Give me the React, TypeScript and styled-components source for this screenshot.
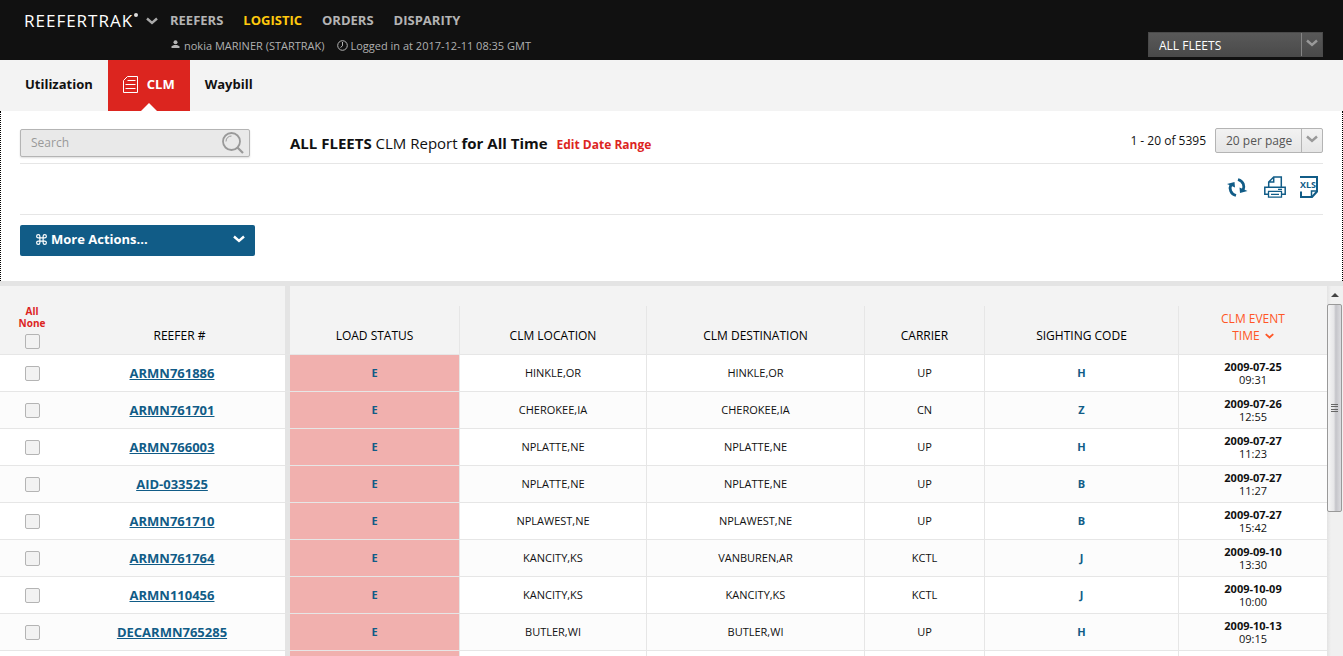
import React from 'react';
import styled, { createGlobalStyle, css } from 'styled-components';

const blue = '#115c87';
const red = '#dc251f';
const line = '#e6e6e6';

const GlobalStyle = createGlobalStyle`
  *, *::before, *::after { box-sizing: border-box; }
  body { margin: 0; background: #fff; color: #111; font: 12px/16px 'Open Sans', 'Noto Sans', sans-serif; }
  button, input, select { font-family: inherit; margin: 0; }
`;

const Page = styled.div`
  display: flex;
  flex-direction: column;
  height: 100vh;
  overflow: hidden;
`;

const TopBar = styled.header`
  display: flex;
  justify-content: space-between;
  align-items: flex-end;
  flex: none;
  height: 60px;
  padding: 0 20px 3px 24px;
  background: #111;
`;

const Brand = styled.div`
  display: flex;
  align-self: flex-start;
`;

const LogoButton = styled.button`
  display: flex;
  align-items: center;
  gap: 8px;
  width: 146px;
  height: 42px;
  padding: 0;
  border: 0;
  background: none;
  color: #fff;
  font-size: 17px;
  line-height: 24px;
  letter-spacing: 1px;
`;

const LogoName = styled.span`
  display: flex;
`;

const LogoDot = styled.i`
  width: 4px;
  height: 4px;
  margin: 4px 0 0 1px;
  border-radius: 2px;
  background: #ddd;
`;

const MainNav = styled.nav`
  display: flex;
  gap: 20px;
  height: 40px;
  align-items: center;
`;

const MainLink = styled.a<{ $active?: boolean }>`
  color: ${p => (p.$active ? '#ffc90e' : '#b4b4b4')};
  font-size: 13px;
  font-weight: 700;
  text-decoration: none;
`;

const Session = styled.div`
  display: flex;
  gap: 12px;
  padding-left: 1px;
  color: #b0b0b0;
  font-size: 11px;
  line-height: 12px;
`;

const SessionItem = styled.span`
  display: flex;
  gap: 3px;
`;

const SelectBox = styled.div<{ $dark?: boolean }>`
  position: relative;
  height: 25px;
  width: ${p => (p.$dark ? '175px' : '108px')};
  select {
    appearance: none;
    width: 100%;
    height: 100%;
    padding: ${p => (p.$dark ? '2px 24px 0 10px' : '0 24px 1px 10px')};
    border: 1px solid ${p => (p.$dark ? '#4a4a4a' : '#b4b4b4')};
    border-radius: ${p => (p.$dark ? '0' : '2px')};
    background: ${p => (p.$dark ? 'linear-gradient(#595959, #4a4a4a)' : 'linear-gradient(#f2f2f2, #e6e6e6)')};
    color: ${p => (p.$dark ? '#fff' : '#555')};
    font-size: 12px;
  }
`;

const SelectArrow = styled.span<{ $dark?: boolean }>`
  position: absolute;
  top: 1px;
  right: 1px;
  bottom: 1px;
  display: flex;
  justify-content: center;
  width: 21px;
  padding-top: 6px;
  border-left: 1px solid ${p => (p.$dark ? '#858585' : '#b4b4b4')};
  pointer-events: none;
`;

const SubNav = styled.nav`
  display: flex;
  flex: none;
  height: 51px;
  padding-left: 10px;
  background: #f3f3f3;
`;

const Tab = styled.a<{ $active?: boolean }>`
  position: relative;
  display: flex;
  align-items: center;
  gap: 9px;
  padding: 0 15px 3px;
  color: #111;
  font-size: 13px;
  font-weight: 700;
  text-decoration: none;
  ${p => p.$active && css`
    background: ${red};
    color: #fff;
    &::after {
      content: '';
      position: absolute;
      left: 50%;
      bottom: 0;
      margin-left: -8px;
      border: 8px solid transparent;
      border-top: 0;
      border-bottom-color: #fff;
    }
  `}
`;

const Tools = styled.section`
  flex: none;
  height: 170px;
  padding: 0 19px;
  border: 1px dotted #000;
  border-width: 0 1px;
`;

const ReportRow = styled.div`
  display: flex;
  align-items: center;
  height: 53px;
  padding-top: 11px;
  border-bottom: 1px solid ${line};
`;

const SearchBox = styled.label`
  display: flex;
  align-items: center;
  width: 230px;
  height: 28px;
  margin-right: 40px;
  padding: 0 5px 0 10px;
  border: 1px solid #b4b4b4;
  border-radius: 2px;
  background: #e9e9e9;
  box-shadow: 0 1px 2px #ddd;
  input {
    flex: 1;
    min-width: 0;
    padding: 0;
    border: 0;
    outline: 0;
    background: none;
    font-size: 12px;
  }
  input::placeholder { color: #999; }
`;

const Title = styled.h1`
  margin: 0;
  font-size: 15px;
  line-height: 20px;
  font-weight: 400;
`;

const EditLink = styled.a`
  margin-left: 9px;
  padding-top: 4px;
  color: ${red};
  font-size: 12px;
  font-weight: 700;
  text-decoration: none;
`;

const Pager = styled.div`
  display: flex;
  align-items: center;
  gap: 9px;
  margin: 0 0 4px auto;
`;

const IconRow = styled.div`
  display: flex;
  justify-content: flex-end;
  align-items: center;
  gap: 14px;
  height: 51px;
  padding: 0 4px 4px 0;
  border-bottom: 1px solid ${line};
`;

const IconButton = styled.button`
  display: flex;
  padding: 0;
  border: 0;
  background: none;
  color: ${blue};
`;

const ActionsButton = styled.button`
  display: flex;
  justify-content: space-between;
  align-items: center;
  width: 235px;
  height: 31px;
  margin-top: 10px;
  padding: 0 10px 3px 15px;
  border: 0;
  border-radius: 2px;
  background: ${blue};
  color: #fff;
  font-size: 13px;
  font-weight: 700;
`;

const ActionsLabel = styled.span`
  display: flex;
  align-items: center;
  gap: 3px;
`;

const GridArea = styled.main`
  display: flex;
  align-items: stretch;
  flex: 1;
  min-height: 0;
  overflow: hidden;
  border-top: 5px solid #e4e4e4;
`;

const Scroller = styled.div`
  flex: 1;
  min-width: 0;
  overflow: hidden;
`;

const Table = styled.table`
  width: 100%;
  table-layout: fixed;
  border-collapse: separate;
  border-spacing: 0;
  text-align: center;
`;

const HeadCell = styled.th<{ $split?: boolean }>`
  height: 69px;
  padding: 20px 0 0;
  border-bottom: 1px solid ${line};
  border-left: ${p => (p.$split ? '5px solid #e4e4e4' : '0')};
  background: #f3f3f3;
  color: #000;
  font-size: 12px;
  line-height: 17px;
  font-weight: 400;
`;

const HeadInner = styled.div<{ $rule?: boolean; $indent?: boolean }>`
  display: flex;
  flex-direction: column;
  justify-content: flex-end;
  align-items: center;
  height: 48px;
  padding: 0 0 10px ${p => (p.$indent ? '10px' : '0')};
  border-right: ${p => (p.$rule ? `1px solid ${line}` : '0')};
`;

const PickInner = styled(HeadInner)`
  padding-bottom: 5px;
`;

const PickLink = styled.button`
  padding: 0;
  border: 0;
  background: none;
  color: ${red};
  font-size: 10px;
  line-height: 12px;
  font-weight: 700;
`;

const SortButton = styled.button`
  padding: 0;
  border: 0;
  background: none;
  color: #ff5626;
  font-size: 12px;
  line-height: 17px;
  svg { margin: 0 0 1px 2px; }
`;

const Check = styled.input`
  appearance: none;
  display: block;
  flex: none;
  width: 15px;
  height: 15px;
  margin: 0 auto;
  border: 1px solid #b4b4b4;
  border-radius: 2px;
  background: #f2f2f2;
  ${PickInner} & { margin: 5px 0 0; }
`;

const Row = styled.tr`
  background: #fff;
  &:nth-child(even) { background: #fcfcfc; }
`;

const Cell = styled.td<{ $rule?: boolean }>`
  height: 37px;
  padding: 0 0 ${p => (p.$rule ? '2px' : '0')};
  border-bottom: 1px solid ${line};
  border-right: ${p => (p.$rule ? `1px solid ${line}` : '0')};
  font-size: 11px;
  line-height: 13px;
`;

const ReeferCell = styled(Cell)`
  padding: 0 5px 0 0;
`;

const StatusCell = styled(Cell)`
  border-left: 5px solid #e4e4e4;
  background: #f1b0ae;
  background-clip: padding-box;
`;

const ReeferLink = styled.a`
  color: ${blue};
  font-size: 13px;
  font-weight: 700;
`;

const Code = styled.b`
  color: ${blue};
`;

const Time = styled.time`
  display: block;
  b { display: block; }
`;

const ScrollBar = styled.div`
  display: flex;
  flex-direction: column;
  flex: none;
  width: 16px;
  padding-right: 1px;
  background: linear-gradient(90deg, #e3e3e3, #f0f0f0 4px);
`;

const ScrollUp = styled.div`
  display: flex;
  justify-content: center;
  align-items: center;
  height: 18px;
`;

const Thumb = styled.div`
  display: flex;
  justify-content: center;
  align-items: center;
  height: 208px;
  border: 1px solid #999;
  border-radius: 2px;
  background: linear-gradient(90deg, #f5f5f5, #e6e6e8 45%, #c4c4c9 60%, #dcdce0);
`;

const Chevron = ({ color, w = 12 }: { color: string; w?: number }) => (
  <svg width={w} height={w * 2 / 3} viewBox="0 0 12 8" fill="none" stroke={color} strokeWidth="2.400" aria-hidden="true">
    <path d="M1 1.5 6 6l5-4.5" />
  </svg>
);

const UserIcon = () => (
  <svg width="10" height="10" viewBox="0 0 10 10" fill="#b4b4b4" aria-hidden="true">
    <circle cx="4.500" cy="2.300" r="2" /><path d="M.5 8V6.300L3 5h3l2.500 1.300V8z" />
  </svg>
);

const ClockIcon = () => (
  <svg width="11" height="11" viewBox="0 0 11 11" fill="none" stroke="#b4b4b4" aria-hidden="true">
    <circle cx="5.500" cy="5.500" r="4.800" /><path d="M5.500 2v3.800L3.500 7.500" />
  </svg>
);

const PageIcon = () => (
  <svg width="15" height="17" viewBox="0 0 15 17" fill="none" stroke="#fff" aria-hidden="true">
    <path d="M4.500.5h10v16H.5v-12zM4.500 4.500h8M2.500 8.500h10M2.500 12.500h10" />
  </svg>
);

const SearchIcon = () => (
  <svg width="22" height="22" viewBox="0 0 22 22" fill="none" stroke="#999" aria-hidden="true">
    <circle cx="9.500" cy="9.500" r="8.500" strokeWidth="1.800" />
    <path d="M15.500 15.500 21 21" strokeWidth="2.200" />
    <path d="M4 9.500C4 6 6.500 4 9.500 4" />
  </svg>
);

const RefreshIcon = () => (
  <svg width="23" height="19" viewBox="0 0 23 19" fill="none" stroke="currentColor" strokeWidth="2.800" aria-hidden="true">
    <path d="M9 17.500C3.500 16 2 10.500 4 6.500" /><path d="M11 1.500c5.500 1.500 7 7 5 11" />
    <path d="M0 6 7.500 4 8 9.500zM20.500 13 13 15l-.5-5.500z" fill="currentColor" stroke="none" />
  </svg>
);

const PrintIcon = () => (
  <svg width="22" height="22" viewBox="0 0 22 22" fill="none" stroke="currentColor" strokeWidth="1.500" aria-hidden="true">
    <path d="M4.700 11V6l5-5h7.600v10M9.700 1v5h-5" />
    <path d="M4 18.300H.8V11.300h20.400v7H18" />
    <path d="M4 15.300h14M4.500 15.300v5.900h13v-5.900M7 18.300h8M14 13.300h4" strokeWidth="1.300" />
  </svg>
);

const XlsIcon = () => (
  <svg width="19" height="22" viewBox="0 0 19 22" fill="none" stroke="currentColor" aria-hidden="true">
    <path d="M0 1h17v14.500L12 21H1v-5.500" strokeWidth="2" />
    <path d="M17 15h-5.500v6" strokeWidth="1.500" />
    <text x="0" y="12" fill="currentColor" stroke="none" fontSize="9" fontWeight="700" fontFamily="'Open Sans', sans-serif">XLS</text>
  </svg>
);

const CommandIcon = () => (
  <svg width="13" height="13" viewBox="0 0 24 24" fill="none" stroke="#fff" strokeWidth="2.200" aria-hidden="true">
    <path d="M15 6v12a3 3 0 1 0 3-3H6a3 3 0 1 0 3 3V6a3 3 0 1 0-3 3h12a3 3 0 1 0-3-3" />
  </svg>
);

const columns = ['LOAD STATUS', 'CLM LOCATION', 'CLM DESTINATION', 'CARRIER', 'SIGHTING CODE'];
const widths = [64, 221, 175, 187, 218, 120, 194, 148];

const rows = [
  ['ARMN761886', 'HINKLE,OR', 'HINKLE,OR', 'UP', 'H', '2009-07-25', '09:31'],
  ['ARMN761701', 'CHEROKEE,IA', 'CHEROKEE,IA', 'CN', 'Z', '2009-07-26', '12:55'],
  ['ARMN766003', 'NPLATTE,NE', 'NPLATTE,NE', 'UP', 'H', '2009-07-27', '11:23'],
  ['AID-033525', 'NPLATTE,NE', 'NPLATTE,NE', 'UP', 'B', '2009-07-27', '11:27'],
  ['ARMN761710', 'NPLAWEST,NE', 'NPLAWEST,NE', 'UP', 'B', '2009-07-27', '15:42'],
  ['ARMN761764', 'KANCITY,KS', 'VANBUREN,AR', 'KCTL', 'J', '2009-09-10', '13:30'],
  ['ARMN110456', 'KANCITY,KS', 'KANCITY,KS', 'KCTL', 'J', '2009-10-09', '10:00'],
  ['DECARMN765285', 'BUTLER,WI', 'BUTLER,WI', 'UP', 'H', '2009-10-13', '09:15'],
];

export default function App() {
  return (
    <Page>
      <GlobalStyle />
      <TopBar>
        <Brand>
          <LogoButton>
            <LogoName>REEFERTRAK<LogoDot /></LogoName>
            <Chevron color="#aaa" />
          </LogoButton>
          <div>
            <MainNav>
              <MainLink href="#reefers">REEFERS</MainLink>
              <MainLink href="#logistic" $active>LOGISTIC</MainLink>
              <MainLink href="#orders">ORDERS</MainLink>
              <MainLink href="#disparity">DISPARITY</MainLink>
            </MainNav>
            <Session>
              <SessionItem><UserIcon />nokia MARINER (STARTRAK)</SessionItem>
              <SessionItem><ClockIcon />Logged in at 2017-12-11 08:35 GMT</SessionItem>
            </Session>
          </div>
        </Brand>
        <SelectBox $dark>
          <select aria-label="Fleet"><option>ALL FLEETS</option></select>
          <SelectArrow $dark><Chevron color="#999" /></SelectArrow>
        </SelectBox>
      </TopBar>
      <SubNav>
        <Tab href="#utilization">Utilization</Tab>
        <Tab href="#clm" $active><PageIcon />CLM</Tab>
        <Tab href="#waybill">Waybill</Tab>
      </SubNav>
      <Tools>
        <ReportRow>
          <SearchBox>
            <input type="text" placeholder="Search" aria-label="Search" />
            <SearchIcon />
          </SearchBox>
          <Title><b>ALL FLEETS</b> CLM Report <b>for All Time</b></Title>
          <EditLink href="#range">Edit Date Range</EditLink>
          <Pager>
            <span>1 - 20 of 5395</span>
            <SelectBox>
              <select aria-label="Rows per page"><option>20 per page</option></select>
              <SelectArrow><Chevron color="#999" /></SelectArrow>
            </SelectBox>
          </Pager>
        </ReportRow>
        <IconRow>
          <IconButton aria-label="Refresh"><RefreshIcon /></IconButton>
          <IconButton aria-label="Print"><PrintIcon /></IconButton>
          <IconButton aria-label="Export to XLS"><XlsIcon /></IconButton>
        </IconRow>
        <ActionsButton>
          <ActionsLabel><CommandIcon />More Actions...</ActionsLabel>
          <Chevron color="#fff" />
        </ActionsButton>
      </Tools>
      <GridArea>
        <Scroller>
          <Table>
            <colgroup>{widths.map((w, i) => <col key={i} width={w} />)}</colgroup>
            <thead>
              <tr>
                <HeadCell>
                  <PickInner>
                    <PickLink>All</PickLink>
                    <PickLink>None</PickLink>
                    <Check type="checkbox" aria-label="Select all rows" />
                  </PickInner>
                </HeadCell>
                <HeadCell><HeadInner $indent>REEFER #</HeadInner></HeadCell>
                {columns.map((name, i) => (
                  <HeadCell key={name} $split={i === 0}><HeadInner $rule>{name}</HeadInner></HeadCell>
                ))}
                <HeadCell>
                  <HeadInner>
                    <SortButton>CLM EVENT<br />TIME <Chevron color="#ff5626" w={9} /></SortButton>
                  </HeadInner>
                </HeadCell>
              </tr>
            </thead>
            <tbody>
              {rows.map(([id, from, to, carrier, code, day, hour]) => (
                <Row key={id}>
                  <Cell><Check type="checkbox" aria-label={`Select ${id}`} /></Cell>
                  <ReeferCell><ReeferLink href={`#${id}`}>{id}</ReeferLink></ReeferCell>
                  <StatusCell $rule><Code>E</Code></StatusCell>
                  <Cell $rule>{from}</Cell>
                  <Cell $rule>{to}</Cell>
                  <Cell $rule>{carrier}</Cell>
                  <Cell $rule><Code>{code}</Code></Cell>
                  <Cell><Time><b>{day}</b>{hour}</Time></Cell>
                </Row>
              ))}
              <Row>
                <Cell /><ReeferCell /><StatusCell $rule /><Cell $rule /><Cell $rule /><Cell $rule /><Cell $rule /><Cell />
              </Row>
            </tbody>
          </Table>
        </Scroller>
        <ScrollBar>
          <ScrollUp>
            <svg width="8" height="4" viewBox="0 0 8 4" aria-hidden="true"><path d="M0 4 4 0l4 4z" fill="#444" /></svg>
          </ScrollUp>
          <Thumb>
            <svg width="7" height="8" viewBox="0 0 7 8" stroke="#666" aria-hidden="true"><path d="M0 .5h7M0 2.500h7M0 5.500h7M0 7.500h7" /></svg>
          </Thumb>
        </ScrollBar>
      </GridArea>
    </Page>
  );
}
